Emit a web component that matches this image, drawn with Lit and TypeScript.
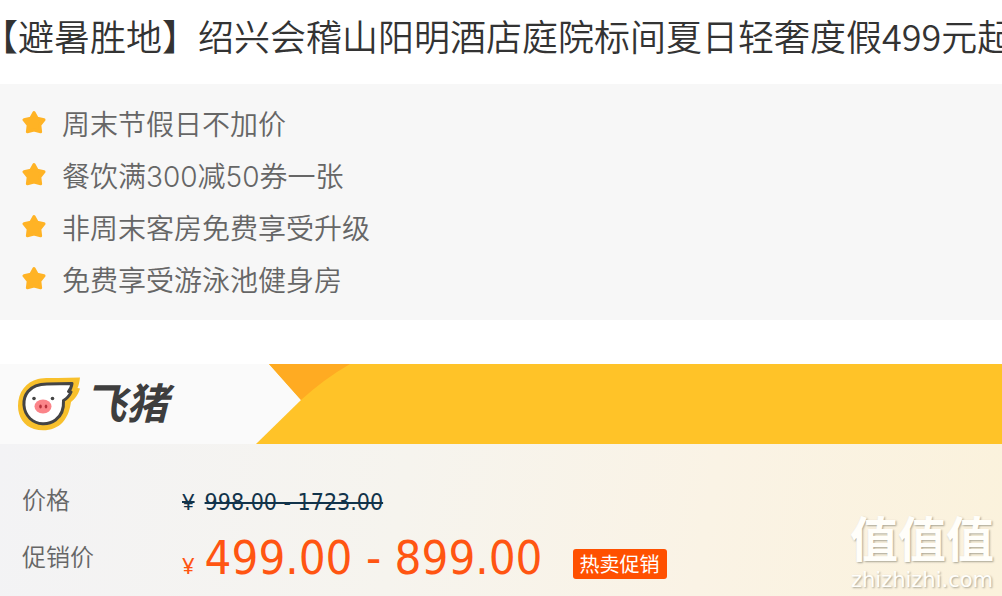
import { LitElement, html, css, svg } from "lit";
import { customElement } from "lit/decorators.js";

const PERKS = [
  "周末节假日不加价",
  "餐饮满300减50券一张",
  "非周末客房免费享受升级",
  "免费享受游泳池健身房",
];

const star = svg`<path d="M12 2.500 15.200 8.200 22 9.800 17.800 15 18.600 21.800 12 20 5.400 21.800 6.200 15 2 9.800 8.800 8.200Z"
  fill="#ffb325" stroke="#ffb325" stroke-width="3" stroke-linejoin="round"/>`;

@customElement("perk-list")
class PerkList extends LitElement {
  static styles = css`
    :host { display: block; background: #f7f7f7; padding: 15px 22px 13px; }
    .list { list-style: none; margin: 0; padding: 0; }
    .item { display: flex; align-items: center; gap: 16px; line-height: 52px; font-size: 28px; font-weight: 350; color: #666; white-space: nowrap; }
    .star { flex: none; width: 24px; height: 24px; margin-bottom: 6px; }
  `;
  render() {
    return html`<ul class="list">
      ${PERKS.map((p) => html`<li class="item"><svg class="star" viewBox="0 0 24 24" aria-hidden="true">${star}</svg><span>${p}</span></li>`)}
    </ul>`;
  }
}

@customElement("brand-banner")
class BrandBanner extends LitElement {
  static styles = css`
    :host { display: flex; height: 80px; background: #ffc328; overflow: hidden; }
    .brand { flex: none; display: flex; align-items: center; width: 238px; padding-left: 18px; background: #fafafa; gap: 4px; }
    .pig { flex: none; width: 62px; height: 54px; }
    .name { font-size: 42px; line-height: 80px; font-weight: 700; font-style: italic; color: #3e3e3e; }
    .arrow { flex: none; width: 94px; height: 80px; }
  `;
  render() {
    return html`
      <div class="brand">
        <svg class="pig" viewBox="0 0 62 54" aria-hidden="true">
          <path d="M62 0.5C61.5 5 60.5 9 59.5 11L62 11.5C60 18 57 22 53 25C52 32 50 39 45 45C38 53 26 55 16 52C6 49 0 40 0 29C0 15 8 5 20 2C26 0.5 32 1 40 1Z" fill="#f8c02c"/>
          <path d="M54 6.5C53.5 10 52 13 50.5 14.5L53 15C51 20 48 22 45.500 23.500C46 32 43 39 37.500 43C30 48.500 19 48 12 41.500C4.500 34 4 22 10 14.500C15 8.500 21 7 29 7Z" fill="#fff" stroke="#444" stroke-width="3" stroke-linejoin="round"/>
          <ellipse cx="25" cy="29.500" rx="8.500" ry="7" fill="#fb8489"/>
          <ellipse cx="22.500" cy="29.500" rx="1.300" ry="2" fill="#b7303b"/>
          <ellipse cx="28" cy="29.500" rx="1.300" ry="2" fill="#b7303b"/>
          <circle cx="16" cy="21.500" r="1.800" fill="#444"/>
          <circle cx="34.500" cy="21.500" r="1.800" fill="#444"/>
        </svg>
        <span class="name">飞猪</span>
      </div>
      <svg class="arrow" viewBox="0 0 94 80" aria-hidden="true">
        <path d="M0 0H13L45 36 0 80Z" fill="#fafafa"/>
        <path d="M13 0H94Q68 15 45 36Z" fill="#ffab22"/>
      </svg>`;
  }
}

@customElement("price-panel")
class PricePanel extends LitElement {
  static styles = css`
    :host { display: block; padding: 29px 22px 9px; background: linear-gradient(100deg, #f3f3f5 0%, #f6f4ee 40%, #faf3e5 70%, #fbf2dc 100%); }
    .rows { display: grid; grid-template-columns: 160px 1fr; margin: 0; line-height: 56px; font-size: 24px; white-space: nowrap; }
    .label { font-weight: 350; color: #666; }
    .value { display: flex; align-items: baseline; gap: 10px; margin: 0; font-family: "DejaVu Sans Condensed", "DejaVu Sans", sans-serif; font-stretch: condensed; }
    .old { color: #12334a; font-size: 23px; }
    .promo { color: #ff5512; }
    .yen { font-family: "Noto Sans", sans-serif; font-size: 22px; }
    .strike { text-decoration: line-through; text-decoration-thickness: 2px; }
    .now { font-size: 47px; }
    .tag { align-self: center; margin: 4px 0 0 20px; padding: 0 7px; background: #ff5000; border-radius: 3px; color: #fff; font: 20px/30px "Noto Sans CJK SC", sans-serif; }
  `;
  render() {
    return html`<dl class="rows">
      <dt class="label">价格</dt>
      <dd class="value old"><s class="yen">¥</s><s class="strike">998.00 - 1723.00</s></dd>
      <dt class="label">促销价</dt>
      <dd class="value promo"><span class="yen">¥</span><span class="now">499.00 - 899.00</span><span class="tag">热卖促销</span></dd>
    </dl>`;
  }
}

@customElement("app-root")
class AppRoot extends LitElement {
  static styles = css`
    :host { display: flex; flex-direction: column; position: relative; min-height: 100vh; overflow: hidden; background: #fff; font-family: Inter, "Noto Sans CJK SC", sans-serif; }
    .title { margin: 0; font: 350 36px/70px "Noto Sans CJK SC", sans-serif; padding-bottom: 14px; color: #333; white-space: nowrap; text-spacing-trim: trim-start; }
    .banner { margin-top: 44px; }
    .prices { flex: 1; }
    .mark { position: absolute; right: 8px; bottom: 6px; display: flex; flex-direction: column; align-items: center; color: #fffefa; text-shadow: 1px 1px 2px #a8a494; }
    .mark-name { font: 700 48px/56px "Noto Sans CJK SC", sans-serif; }
    .mark-site { font: 400 21px/32px "DejaVu Sans", sans-serif; }
  `;
  render() {
    return html`
      <h1 class="title">【避暑胜地】绍兴会稽山阳明酒店庭院标间夏日轻奢度假499元起</h1>
      <perk-list></perk-list>
      <brand-banner class="banner"></brand-banner>
      <price-panel class="prices"></price-panel>
      <div class="mark"><span class="mark-name">值值值</span><span class="mark-site">zhizhizhi.com</span></div>`;
  }
}
